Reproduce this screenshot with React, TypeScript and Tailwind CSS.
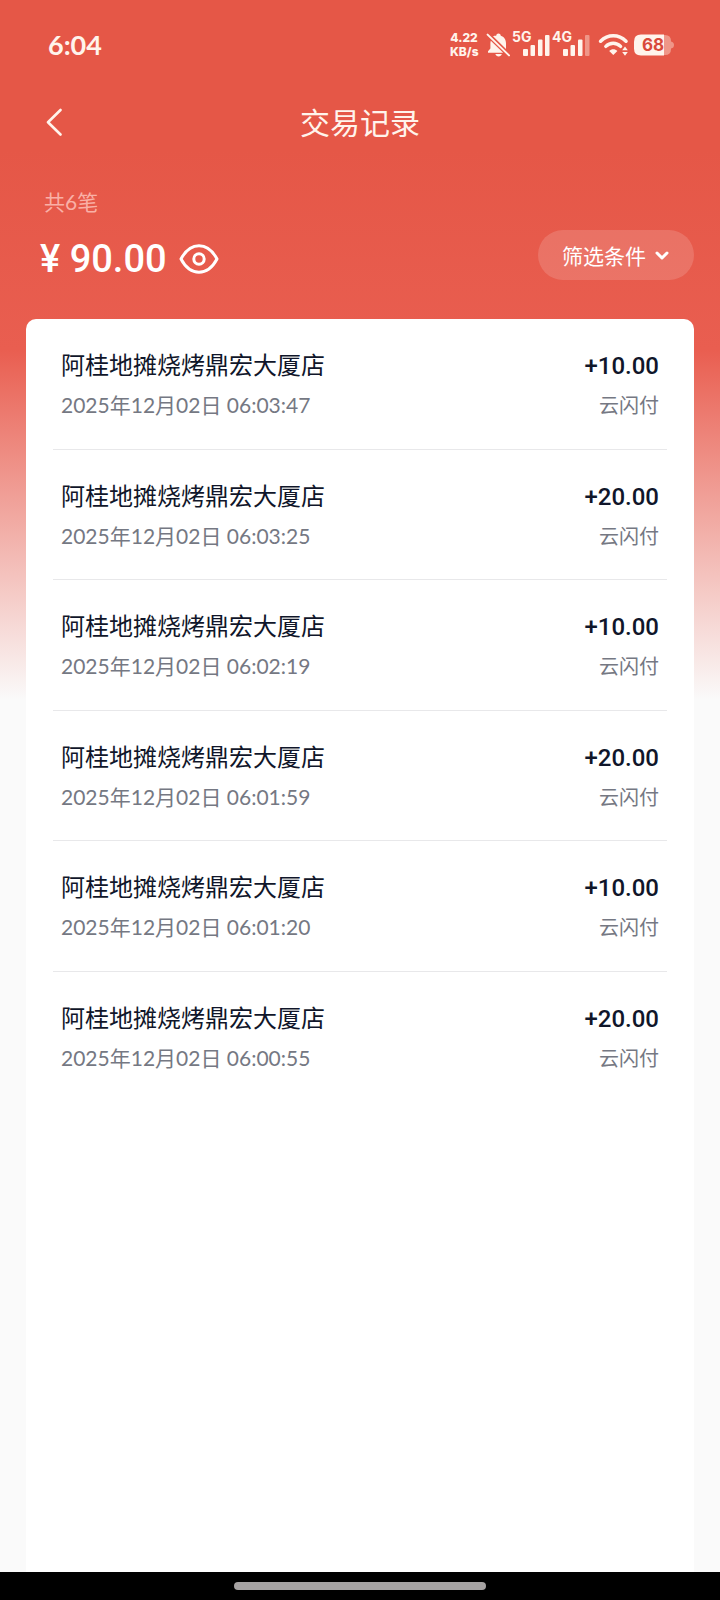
import React from 'react';

interface Transaction {
  store: string;
  time: string;
  amount: string;
  channel: string;
}

const transactions: Transaction[] = [
  { store: '阿桂地摊烧烤鼎宏大厦店', time: '2025年12月02日 06:03:47', amount: '+10.00', channel: '云闪付' },
  { store: '阿桂地摊烧烤鼎宏大厦店', time: '2025年12月02日 06:03:25', amount: '+20.00', channel: '云闪付' },
  { store: '阿桂地摊烧烤鼎宏大厦店', time: '2025年12月02日 06:02:19', amount: '+10.00', channel: '云闪付' },
  { store: '阿桂地摊烧烤鼎宏大厦店', time: '2025年12月02日 06:01:59', amount: '+20.00', channel: '云闪付' },
  { store: '阿桂地摊烧烤鼎宏大厦店', time: '2025年12月02日 06:01:20', amount: '+10.00', channel: '云闪付' },
  { store: '阿桂地摊烧烤鼎宏大厦店', time: '2025年12月02日 06:00:55', amount: '+20.00', channel: '云闪付' },
];

const Signal: React.FC<{ label: string; weak?: boolean }> = ({ label, weak }) => (
  <div className="relative h-6 w-9">
    <span className="absolute -left-0.5 -top-0.5 text-[14px] leading-3 font-bold">{label}</span>
    <svg className="ml-2 h-6 w-7" viewBox="0 0 28 24" fill="currentColor">
      <rect x="1" y="16" width="5" height="7" rx="1" />
      <rect x="8.5" y="12" width="4.5" height="11" rx="1" />
      <rect x="16" y="6.5" width="4.5" height="16.5" rx="1" />
      <rect x="23" y="2" width="4.5" height="21" rx="1" opacity={weak ? 0.4 : 1} />
    </svg>
  </div>
);

const StatusBar: React.FC = () => (
  <div className="flex h-[90px] items-center justify-between pl-12 pr-[46px] text-[#fff4ec]">
    <span className="font-[Lato,sans-serif] text-[27px] leading-8 font-bold">6:04</span>
    <div className="flex items-center gap-1 font-[Inter,sans-serif]">
      <div className="mr-1 w-7 text-center text-[12px] leading-[14px] font-extrabold">
        <div>4.22</div>
        <div>KB/s</div>
      </div>
      {/* Muted bell */}
      <svg className="h-6 w-6" viewBox="0 0 24 24" fill="currentColor">
        <path d="M7 3.2 L20 16 V10.5 C20 6.5 18 3.6 14.8 2.8 C14.6 1.4 13.7.6 12.5.6 C11.3.6 10.4 1.4 10.2 2.8 C9 2.8 8 2.8 7 3.2Z" />
        <path d="M4.8 7.8 L17.2 19.8 H2 V18.2 L4.4 15.6 V10.5 C4.4 9.4 4.5 8.5 4.8 7.8Z" />
        <path d="M9.4 21 H15.8 C15.4 22.5 14.2 23.4 12.6 23.4 C11 23.4 9.8 22.5 9.4 21Z" />
        <path d="M1.6 1.6 L23 22.4" fill="none" stroke="currentColor" strokeWidth="2" strokeLinecap="round" />
      </svg>
      <Signal label="5G" />
      <div className="mr-1">
        <Signal label="4G" weak />
      </div>
      {/* Wifi */}
      <svg className="h-6 w-8" viewBox="0 0 32 24" fill="none" stroke="currentColor">
        <path d="M2.6 8.2 C10 1 20.5 1 28 8.2" strokeWidth="3.6" strokeLinecap="round" />
        <path d="M7.8 13.4 C12 9.2 18.4 9.2 22.6 13.4" strokeWidth="3.4" strokeLinecap="round" />
        <path d="M11.2 18 C13.6 15.6 17 15.6 19.4 18 L15.3 22Z" fill="currentColor" stroke="none" />
        <path d="M24.2 17.2 L27 13.4 L29.8 17.2Z M24.2 19 L27 22.8 L29.8 19Z" fill="currentColor" stroke="none" />
      </svg>
      {/* Battery */}
      <div className="relative h-[22px] w-10">
        <svg className="h-[22px] w-10" viewBox="0 0 40 22" fill="currentColor">
          <path d="M29 1 H31 Q37 1 37 7 V7.5 Q40 8 40 11 Q40 14 37 14.5 V15 Q37 21 31 21 H29Z" opacity="0.4" />
          <path d="M7 0.5 H30 V21.5 H7 Q0 21.5 0 14.5 V7.5 Q0 0.5 7 0.5Z" />
        </svg>
        <span className="absolute inset-0 pr-0.5 text-center text-[17px] leading-[22px] font-bold text-[#d9493a]">68</span>
      </div>
    </div>
  </div>
);

const TransactionRow: React.FC<{ item: Transaction }> = ({ item }) => (
  <li className="mx-[27px] flex justify-between border-b border-[#e8e8ea] px-2 pt-[27px] pb-[26px] last:border-b-0 even:pb-[25px]">
    <div>
      <div className="text-[24px] leading-9 text-[#10162a]">{item.store}</div>
      <div className="pt-[5px] font-[Lato,'Noto_Sans_CJK_SC',sans-serif] text-[21px] leading-9 text-[#757883]">{item.time}</div>
    </div>
    <div className="text-right">
      <div className="font-[Roboto,sans-serif] text-[24px] leading-10 font-medium text-[#10162a]">{item.amount}</div>
      <div className="pt-px text-[20px] leading-9 text-[#757883]">{item.channel}</div>
    </div>
  </li>
);

export default function App() {
  return (
    <div className="flex min-h-screen flex-col bg-[#fafafa] bg-[linear-gradient(180deg,#e55747_0px,#e55747_150px,#e95e50_350px,#fafafa_700px)] font-['Noto_Sans_CJK_SC',sans-serif]">
      <StatusBar />

      <header className="grid h-16 grid-cols-[1fr_auto_1fr] items-center px-11 text-[#fff4ec]">
        <button type="button" aria-label="返回" className="w-6">
          <svg className="h-7 w-6" viewBox="0 0 24 28" fill="none" stroke="currentColor" strokeWidth="2.6" strokeLinecap="round" strokeLinejoin="round">
            <path d="M16.5 2 L4 14.2 L16.5 26.5" />
          </svg>
        </button>
        <h1 className="pb-0.5 text-[30px] leading-10">交易记录</h1>
      </header>

      <section className="px-[26px] pt-[31px] pb-[35px] text-white">
        <p className="pl-[18px] text-[21px] leading-8 text-[#f9b0a6]">
          共<span className="font-[Lato,sans-serif]">6</span>笔
        </p>
        <div className="flex items-start justify-between pt-3">
          <div className="flex items-center gap-3 pt-1 pl-[14px] font-[Roboto,sans-serif] font-medium">
            <span className="text-[38px] leading-[50px]">¥ 90.00</span>
            <button type="button" aria-label="隐藏金额">
              <svg className="h-8 w-10" viewBox="0 0 40 32" fill="none" stroke="currentColor" strokeWidth="3">
                <path d="M2 16 C6 8.5 12 2.8 20 2.8 C28 2.8 34 8.5 38 16 C34 23.5 28 29.2 20 29.2 C12 29.2 6 23.5 2 16Z" strokeLinejoin="round" />
                <circle cx="20" cy="16" r="5.2" />
              </svg>
            </button>
          </div>
          <button type="button" className="flex h-[50px] items-center gap-2 rounded-full bg-white/15 px-6 text-[21px] leading-8">
            筛选条件
            <svg className="h-4 w-4" viewBox="0 0 16 16" fill="none" stroke="currentColor" strokeWidth="3" strokeLinecap="round" strokeLinejoin="round">
              <path d="M3 6 L8 11 L13 6" />
            </svg>
          </button>
        </div>
      </section>

      <main className="mx-[26px] flex-1 rounded-t-[10px] bg-white">
        <ul>
          {transactions.map((item) => (
            <TransactionRow key={item.time} item={item} />
          ))}
        </ul>
      </main>

      {/* Gesture bar */}
      <footer className="flex h-7 items-center justify-center bg-black">
        <div className="h-2 w-[35%] rounded-full bg-[#a5a2a2]" />
      </footer>
    </div>
  );
}
